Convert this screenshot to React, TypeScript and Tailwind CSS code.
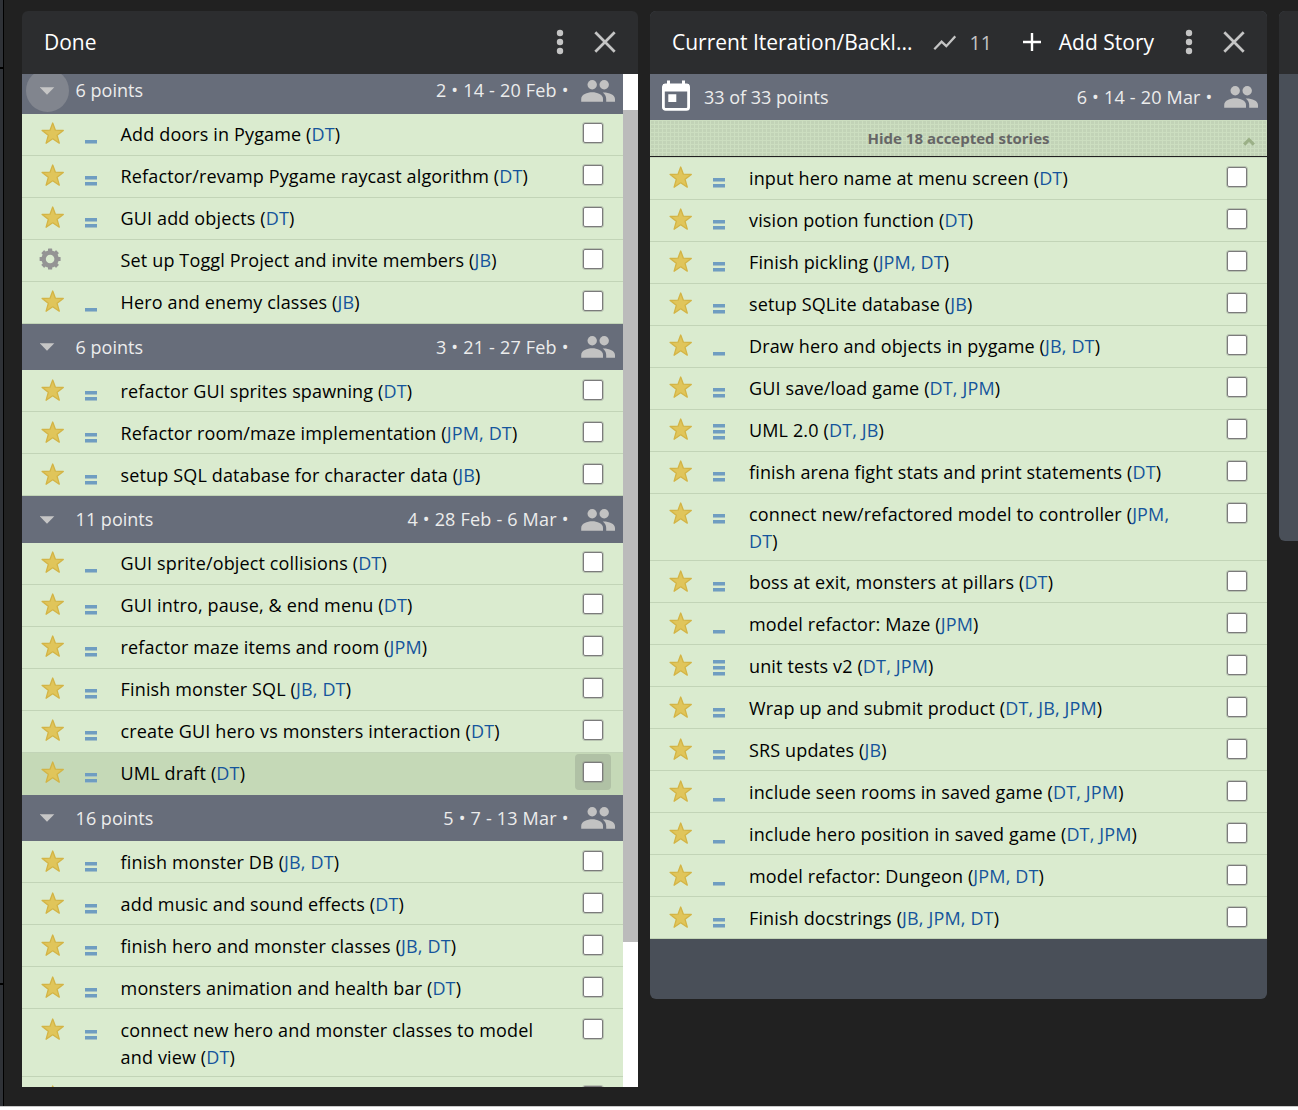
import React from 'react';

type Story = {
  title: string;
  owners: string[];
  points: number;
  chore?: boolean;
  hovered?: boolean;
  lowered?: boolean;
  wrapped?: boolean;
};
type Iteration = { points: number; label: string; height: 'first' | 'base' | 'tall'; stories: Story[]; focused?: boolean };

const s = (title: string, owners: string, points: number, extra: Partial<Story> = {}): Story => ({
  title,
  owners: owners.split(' '),
  points,
  ...extra,
});

const low = { lowered: true };

const done: Iteration[] = [
  {
    points: 6,
    label: '2 • 14 - 20 Feb •',
    height: 'first',
    focused: true,
    stories: [
      s('Add doors in Pygame', 'DT', 1),
      s('Refactor/revamp Pygame raycast algorithm', 'DT', 2),
      s('GUI add objects', 'DT', 2),
      s('Set up Toggl Project and invite members', 'JB', 0, { chore: true }),
      s('Hero and enemy classes', 'JB', 1),
    ],
  },
  {
    points: 6,
    label: '3 • 21 - 27 Feb •',
    height: 'base',
    stories: [
      s('refactor GUI sprites spawning', 'DT', 2, low),
      s('Refactor room/maze implementation', 'JPM DT', 2, low),
      s('setup SQL database for character data', 'JB', 2, low),
    ],
  },
  {
    points: 11,
    label: '4 • 28 Feb - 6 Mar •',
    height: 'tall',
    stories: [
      s('GUI sprite/object collisions', 'DT', 1),
      s('GUI intro, pause, & end menu', 'DT', 2),
      s('refactor maze items and room', 'JPM', 2),
      s('Finish monster SQL', 'JB DT', 2),
      s('create GUI hero vs monsters interaction', 'DT', 2),
      s('UML draft', 'DT', 2, { hovered: true }),
    ],
  },
  {
    points: 16,
    label: '5 • 7 - 13 Mar •',
    height: 'base',
    stories: [
      s('finish monster DB', 'JB DT', 2, low),
      s('add music and sound effects', 'DT', 2, low),
      s('finish hero and monster classes', 'JB DT', 2, low),
      s('monsters animation and health bar', 'DT', 2, low),
      s('connect new hero and monster classes to model and view', 'DT', 2, { lowered: true, wrapped: true }),
      s('', '', 0),
    ],
  },
];

const current: Story[] = [
  s('input hero name at menu screen', 'DT', 2),
  s('vision potion function', 'DT', 2),
  s('Finish pickling', 'JPM DT', 2),
  s('setup SQLite database', 'JB', 2),
  s('Draw hero and objects in pygame', 'JB DT', 1),
  s('GUI save/load game', 'DT JPM', 2),
  s('UML 2.0', 'DT JB', 3),
  s('finish arena fight stats and print statements', 'DT', 2),
  s('connect new/refactored model to controller', 'JPM DT', 2, { wrapped: true }),
  s('boss at exit, monsters at pillars', 'DT', 2, low),
  s('model refactor: Maze', 'JPM', 1, low),
  s('unit tests v2', 'DT JPM', 3, low),
  s('Wrap up and submit product', 'DT JB JPM', 2, low),
  s('SRS updates', 'JB', 2, low),
  s('include seen rooms in saved game', 'DT JPM', 1, low),
  s('include hero position in saved game', 'DT JPM', 1, low),
  s('model refactor: Dungeon', 'JPM DT', 1, low),
  s('Finish docstrings', 'JB JPM DT', 2, low),
];

const Star = () => (
  <svg className="h-[23px] w-[24px]" viewBox="0 0 24 23">
    <path
      d="M11.700 1L14.400 8.200L22.300 8.500L16.100 13.300L18.300 21.200L11.700 16.800L5.100 21.200L7.300 13.300L1.100 8.500L9 8.200Z"
      fill="#e0c55a"
      stroke="#d3b445"
      strokeWidth="1.300"
      strokeLinejoin="round"
    />
  </svg>
);

const Gear = () => (
  <svg className="-ml-[2px] h-[23px] w-[24px]" viewBox="0 0 24 23">
    <g fill="#949494">
      {[0, 45, 90, 135].map((a) => (
        <rect key={a} x="9" y="0.5" width="4.2" height="21" rx="0.6" transform={`rotate(${a} 11.1 11)`} />
      ))}
      <circle cx="11.1" cy="11" r="8.700" />
    </g>
    <circle cx="11.1" cy="11" r="4.300" fill="#daebcf" />
  </svg>
);

const People = () => (
  <svg className="h-[24px] w-[35px] shrink-0" viewBox="0 0 35 24" fill="#c2c2c2">
    <circle cx="12.2" cy="5.800" r="4.700" />
    <circle cx="24.2" cy="5.800" r="4.700" />
    <path d="M1.200 22.700v-2.800c0-4.400 6-6.600 11-6.600s10.800 2.200 10.800 6.600v2.800z" />
    <path d="M23.600 13.400c5.600 0 11.400 2.300 11.400 6.500v2.800h-8.800v-2.800c0-2.800-1.400-4.800-3.500-6.400z" />
  </svg>
);

const Kebab = () => (
  <svg className="h-[26px] w-[8px] shrink-0" viewBox="0 0 8 26" fill="#c4c4c4">
    <circle cx="4" cy="4" r="3.200" />
    <circle cx="4" cy="13" r="3.200" />
    <circle cx="4" cy="22" r="3.200" />
  </svg>
);

const Close = () => (
  <svg className="h-[22px] w-[22px] shrink-0" viewBox="0 0 22 22" stroke="#c4c4c4" strokeWidth="2.700">
    <path d="M1.300 1.300L20.700 20.700M20.700 1.300L1.300 20.700" />
  </svg>
);

const Calendar = () => (
  <svg className="h-[31px] w-[28px]" viewBox="0 0 28 31" fill="none">
    <rect x="1.400" y="4.800" width="25.200" height="24.600" rx="2.200" stroke="#fff" strokeWidth="2.800" />
    <path d="M1 4h26v7.500H1zM5 .5h3V4H5zM20 .5h3V4h-3zM6.300 14.300h8v7.800h-8z" fill="#fff" />
  </svg>
);

const Points = ({ n }: { n: number }) => (
  <div className="flex h-[17px] w-[12px] flex-col justify-end gap-[2px]">
    {Array.from({ length: n }, (_, i) => (
      <div key={i} className="h-[4px] border-b border-[#a4c1c6] bg-[#6f9dc1]" />
    ))}
  </div>
);

function Row({ story, textInset }: { story: Story; textInset: string }) {
  const padding = story.lowered
    ? story.wrapped
      ? 'pt-px pb-[5px] '
      : 'pt-px pb-[6px] '
    : story.wrapped
      ? 'pb-[5px] '
      : 'pb-[7px] ';
  return (
    <div
      className={
        'flex shrink-0 items-start border-b ' +
        padding +
        (story.hovered ? 'border-[#c5d9b7] bg-[#c5d9b7]' : 'border-[#c2d4b7] bg-[#daebcf]')
      }
    >
      <div className="w-[63px] shrink-0 pt-[8px] pl-[19px]">{story.chore ? <Gear /> : <Star />}</div>
      <div className={'shrink-0 pt-[13px] ' + textInset}>
        <Points n={story.points} />
      </div>
      <div className="mt-[7px] w-[430px] text-[18px] leading-[27px] tracking-[0.14px] text-black">
        {story.title && (
          <>
            {story.title} (
            {story.owners.map((o, i) => (
              <React.Fragment key={o}>
                <span className="text-[#15559c]">
                  {o}
                  {i < story.owners.length - 1 ? ',' : ''}
                </span>
                {i < story.owners.length - 1 ? ' ' : ''}
              </React.Fragment>
            ))}
            )
          </>
        )}
      </div>
      <div
        className={
          'mt-px mr-[12px] -mb-[7px] ml-auto flex size-[36px] shrink-0 items-center justify-center rounded-[4px] ' +
          (story.hovered ? 'bg-[#b0c1a5]' : '')
        }
      >
        <div className="size-[20px] rounded-[2px] border border-[#7b7b7b] bg-white outline-1 outline-[#7b7b7b]/35" />
      </div>
    </div>
  );
}

const headerHeights = { first: 'h-[47px] -mt-[7px]', base: 'h-[46px]', tall: 'h-[47px]' };

function IterationHeader({ it }: { it: Iteration }) {
  return (
    <div className={'flex shrink-0 items-center bg-[#676d7a] pl-[4px] text-[18px] text-[#ececec] ' + headerHeights[it.height]}>
      <div className={'flex size-[43px] items-center justify-center rounded-full ' + (it.focused ? 'bg-[#81858e]' : '')}>
        <svg className="h-[8px] w-[15px]" viewBox="0 0 15 8">
          <path d="M-.3 .3h14.600L7 7.800z" fill="#c6c6c6" />
        </svg>
      </div>
      <div className="ml-[6.6px]">{it.points} points</div>
      <div className="mr-[11.4px] ml-auto tracking-[0.2px]">{it.label}</div>
      <div className="mr-[8px]">
        <People />
      </div>
    </div>
  );
}

export default function App() {
  return (
    <div className="flex h-[1110px] w-[1298px] flex-col overflow-hidden bg-white font-['Open_Sans',sans-serif]">
      <div className="flex h-[1107px] shrink-0 items-start border-b border-[#c9c9c9] bg-[#212121]">
        <div className="flex h-full w-[4px] shrink-0 flex-col border-r border-black bg-[#2f3237]">
          <div className="mt-[67px] h-[2px] bg-black" />
          <div className="mt-[914px] h-[2px] bg-black" />
        </div>

        <section className="mt-[11px] ml-[18px] flex h-[1076px] w-[616px] shrink-0 flex-col">
          <header className="flex h-[63px] shrink-0 items-center rounded-t-[6px] bg-[#2c2d2f] pr-[22px] pl-[22px]">
            <h2 className="text-[21px] text-white">Done</h2>
            <div className="-mt-px ml-auto flex items-center gap-[30px]">
              <Kebab />
              <Close />
            </div>
          </header>
          <div className="flex min-h-0 flex-1">
            <div className="flex w-[601px] flex-col overflow-hidden">
              {done.map((it) => (
                <React.Fragment key={it.label}>
                  <IterationHeader it={it} />
                  {it.stories.map((st) => (
                    <Row key={st.title} story={st} textInset="w-[35.6px]" />
                  ))}
                </React.Fragment>
              ))}
            </div>
            <div className="w-[15px] bg-white pt-[36px]">
              <div className="h-[832px] bg-[#bbbbbb]" />
            </div>
          </div>
        </section>

        <section className="mt-[11px] ml-[12px] flex w-[617px] shrink-0 flex-col overflow-hidden rounded-[6px] bg-[#494f58]">
          <header className="flex h-[63px] shrink-0 items-center bg-[#2c2d2f] pr-[22px] pl-[22px]">
            <h2 className="w-[242px] text-[21px] whitespace-nowrap text-white">Current Iteration/Backl...</h2>
            <svg className="ml-[19px] h-[16px] w-[23px] shrink-0" viewBox="0 0 23 16" fill="none" stroke="#c4c4c4" strokeWidth="2.300">
              <path d="M1.300 14.200L8.600 6.700L13.300 11.200L22.300 1.300" />
            </svg>
            <span className="ml-[13.5px] text-[19.5px] text-[#c4c4c4]">11</span>
            <svg className="-mt-px ml-[31px] h-[18px] w-[18px] shrink-0" viewBox="0 0 18 18" stroke="#fff" strokeWidth="2.400">
              <path d="M9 0v18M0 9h18" />
            </svg>
            <span className="ml-[18px] text-[21px] whitespace-nowrap text-white">Add Story</span>
            <div className="-mt-px ml-auto flex items-center gap-[30px]">
              <Kebab />
              <Close />
            </div>
          </header>
          <div className="flex h-[46px] items-center bg-[#676d7a] pr-[9px] pl-[12px] text-[18px] text-[#ececec]">
            <div className="-mt-[4px]">
              <Calendar />
            </div>
            <div className="ml-[14px]">33 of 33 points</div>
            <div className="mr-[10.5px] ml-auto tracking-[0.2px]">6 • 14 - 20 Mar •</div>
            <People />
          </div>
          <div className="flex h-[37px] items-center border-b border-[#212121] bg-[#c2d3b7] bg-[linear-gradient(to_right,#ccdec0_1px,transparent_1px),linear-gradient(to_bottom,#ccdec0_1px,transparent_1px)] bg-size-[4px_4px]">
            <div className="flex-1 text-center text-[15px] font-bold text-[#666]">
              Hide 18 accepted stories
            </div>
            <svg className="mt-[6px] mr-[12px] -ml-[24px] h-[9px] w-[12px]" viewBox="0 0 12 9" fill="none" stroke="#9bb087" strokeWidth="3.200">
              <path d="M1.200 7.600L6 2.700L10.800 7.600" />
            </svg>
          </div>
          <div className="flex flex-col border-t border-[#c9d9bf]">
            {current.map((st) => (
              <Row key={st.title} story={st} textInset="w-[36px]" />
            ))}
          </div>
          <div className="h-[60px]" />
        </section>

        <section className="mt-[11px] ml-[12px] h-[530px] flex-1 overflow-hidden rounded-l-[6px] bg-[#494f58]">
          <div className="h-[63px] bg-[#2c2d2f]" />
        </section>
      </div>
    </div>
  );
}
